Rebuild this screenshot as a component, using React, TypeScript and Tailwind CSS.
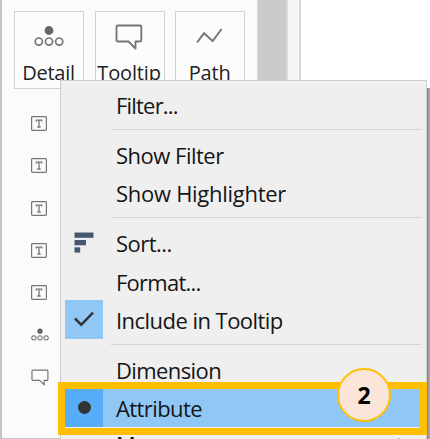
import React from "react";

function Dots({ className }: { className: string }) {
  return (
    <svg className={className} viewBox="0 0 30 20" fill="none" stroke="#767676" strokeWidth="1.7">
      <circle cx="15" cy="4.5" r="4.4" fill="#666" stroke="none" />
      <circle cx="4.8" cy="15.6" r="3.6" />
      <circle cx="15" cy="15.6" r="3.6" />
      <circle cx="25.2" cy="15.6" r="3.6" />
    </svg>
  );
}

function Bubble({ className, weight }: { className: string; weight: number }) {
  return (
    <svg className={className} viewBox="0 0 28 26" fill="none" stroke="#737373" strokeWidth={weight} strokeLinejoin="round">
      <path d="M3 1.5H25Q26.3 1.5 26.3 3V16Q26.3 17.5 25 17.5H20.5V24.5L13.5 17.5H3Q1.5 17.5 1.5 16V3Q1.5 1.5 3 1.5Z" />
    </svg>
  );
}

function TextMark() {
  return (
    <svg className="block h-[15px] w-4" viewBox="0 0 16 15" fill="none" stroke="#777">
      <rect x="0.6" y="0.6" width="14.8" height="13.8" rx="0.8" strokeWidth="1.2" />
      <path d="M5.3 5.6V4.2H10.7V5.6M8 4.2V11M6.3 11H9.7" strokeWidth="1.3" />
    </svg>
  );
}

function Card({ label, tracking, children }: { label: string; tracking: string; children: React.ReactNode }) {
  return (
    <div className="flex h-[78px] w-[70px] shrink-0 flex-col items-center border border-[#d2d2d2] bg-[#fcfcfc] pr-px">
      <div className="flex h-[48px] shrink-0 items-start pt-[12px]">{children}</div>
      <div className={"whitespace-nowrap text-[20px] leading-[26px] text-[#222] " + tracking}>{label}</div>
    </div>
  );
}

function Separator() {
  return (
    <div className="flex h-[11px] shrink-0 items-center pl-[50px] pr-[5px]">
      <div className="h-px w-full bg-[#d2d2d2]" />
    </div>
  );
}

type ItemProps = {
  label: string;
  tracking: string;
  icon?: React.ReactNode;
  iconBg?: string;
  rowBg?: string;
  shift?: string;
};

function Item({ label, tracking, icon, iconBg = "", rowBg = "", shift = "pt-[1.5px]" }: ItemProps) {
  return (
    <div className={"ml-1 mr-[5px] flex h-[38.5px] shrink-0 items-center " + rowBg}>
      <div className={"flex h-full w-[38px] shrink-0 items-center justify-center " + iconBg}>{icon}</div>
      <span className={"ml-[13px] whitespace-nowrap text-[22px] leading-[30px] text-[#151515] " + shift + " " + tracking}>
        {label}
      </span>
    </div>
  );
}

export default function App() {
  return (
    <div className="relative h-[439px] w-[430px] overflow-hidden bg-white font-['Open_Sans','Noto_Sans',sans-serif]">
      <div className="flex h-full w-[300.5px] border-r-2 border-[#d8d8d8] bg-[#f5f5f5]">
        <div className="h-full w-[257px] border-b border-l-2 border-[#c4c4c4] bg-[#fbfbfb] pl-3">
          <div className="flex gap-[10.6px] pt-[11px]">
            <Card label="Detail" tracking="tracking-[-0.25px]">
              <Dots className="mt-[2px] h-5 w-[30px]" />
            </Card>
            <Card label="Tooltip" tracking="tracking-[-0.15px]">
              <Bubble className="h-[26px] w-7" weight={1.8} />
            </Card>
            <Card label="Path" tracking="tracking-[-0.15px]">
              <svg className="mt-[4px] h-4 w-[27px]" viewBox="0 0 27 16" fill="none" stroke="#777" strokeWidth="2">
                <path d="M1 14.5L8 5.3L16.7 13L25.6 1" />
              </svg>
            </Card>
          </div>
          <div className="ml-[17px] mt-[27px] flex flex-col gap-[27.3px]">
            <TextMark />
            <TextMark />
            <TextMark />
            <TextMark />
            <TextMark />
            <Dots className="block h-[15px] w-[18px]" />
            <Bubble className="-mt-px block h-[17px] w-[18px]" weight={1.8} />
          </div>
        </div>
        <div className="h-full w-[31px] border-l border-r-2 border-[#dadada] bg-[#cbcbcb]" />
      </div>

      <div className="absolute left-[60px] top-20 flex h-[380px] w-[367px] flex-col border border-[#cdcdcd] bg-[#efefef] pt-[4.5px]">
        <Item label="Filter..." tracking="tracking-[-0.8px]" shift="pt-0" />
        <Separator />
        <Item label="Show Filter" tracking="tracking-[-0.5px]" />
        <Item label="Show Highlighter" tracking="tracking-[-0.28px]" shift="pt-0" />
        <Separator />
        <Item
          label="Sort..."
          tracking="tracking-[-0.55px]"
          icon={
            <svg className="h-[21px] w-5" viewBox="0 0 20 21" fill="#465870">
              <rect x="0.5" y="0.5" width="19" height="5.3" />
              <rect x="0.5" y="8" width="11.5" height="5.3" />
              <rect x="0.5" y="15.3" width="5.7" height="5.3" />
            </svg>
          }
        />
        <Item label="Format..." tracking="tracking-[-0.75px]" />
        <Item
          label="Include in Tooltip"
          tracking="tracking-[-0.54px]"
          iconBg="bg-[#91c7f5]"
          icon={
            <svg className="h-4 w-5" viewBox="0 0 20 16" fill="none" stroke="#333" strokeWidth="2.5">
              <path d="M1 7.5L7.2 13.8L19 1.7" />
            </svg>
          }
        />
        <Separator />
        <Item label="Dimension" tracking="tracking-[-0.6px]" />
        <Item
          label="Attribute"
          tracking="tracking-[-0.58px]"
          rowBg="bg-[#91c7f5]"
          iconBg="bg-[#56adf8]"
          icon={<span className="block h-[13px] w-[13px] rounded-full bg-[#333]" />}
        />
        <Item label="Measure" tracking="tracking-[-0.5px]" shift="pb-[3px]" />
      </div>
      <div className="absolute bottom-0 left-[427px] top-[88px] w-[3px] bg-linear-to-r from-[#858585] to-[#b0b0b0]" />
      <svg className="absolute left-[396px] top-[438px] h-2 w-2" viewBox="0 0 8 8"><path d="M2.5 0L7 4L2.5 8Z" fill="#333" /></svg>
      <div className="absolute left-[58px] top-[382px] h-[53px] w-[369px] border-[7px] border-[#ffbf00]" />
      <div className="absolute left-[337px] top-[368px] flex h-[54px] w-[54px] items-center justify-center rounded-full border-2 border-[#ffbf00] bg-[#fbe5d8] text-[23px] font-bold leading-none text-black">
        2
      </div>
    </div>
  );
}
